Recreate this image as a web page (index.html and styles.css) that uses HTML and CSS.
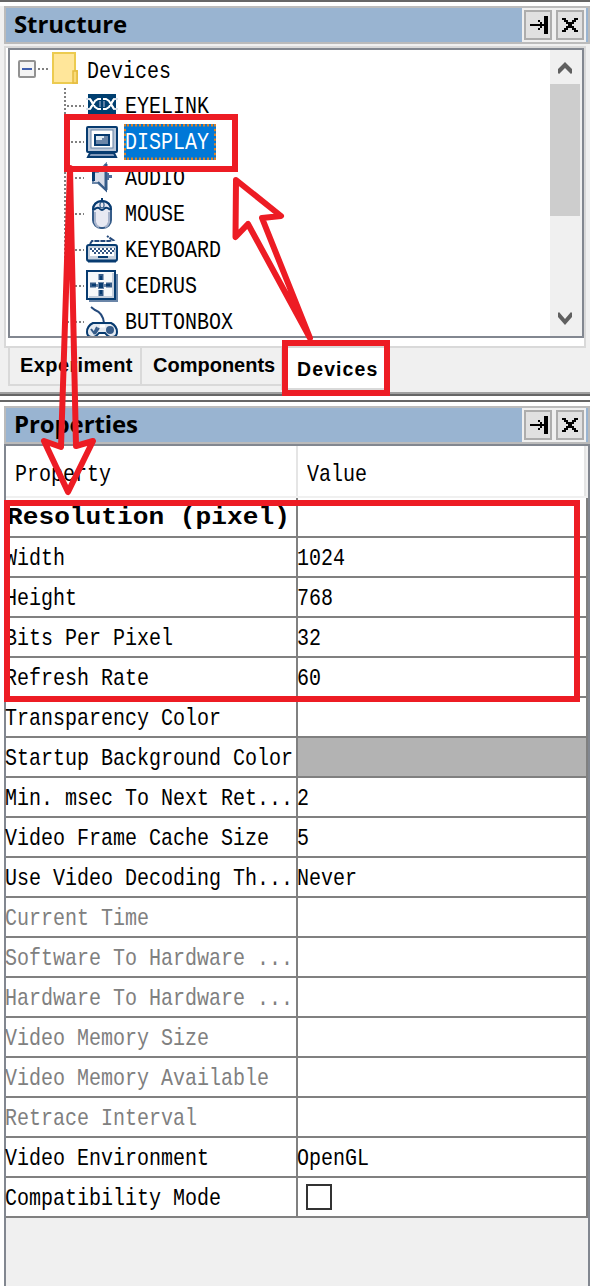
FILE: index.html
```html
<!DOCTYPE html>
<html lang="en">
<head>
<meta charset="utf-8">
<title>Structure and Properties</title>
<link rel="stylesheet" href="styles.css">
</head>
<body>
<div class="app">
  <section class="structure">
    <header class="titlebar"><h2>Structure</h2>
      <div class="buttons">
        <button><svg width="24" height="26" shape-rendering="crispEdges"><path d="M4 12h14v2H4zM18 4h4v18h-4zM14 10h2v6h-2zM12 8h2v2h-2zM12 16h2v2h-2z"/></svg></button>
        <button><svg width="24" height="26" shape-rendering="crispEdges"><path d="M4 6h4v2H4zM16 6h4v2h-4zM6 8h4v2H6zM14 8h4v2h-4zM8 10h8v2H8zM10 12h4v2h-4zM8 14h8v2H8zM6 16h4v2H6zM14 16h4v2h-4zM4 18h4v2H4zM16 18h4v2h-4z"/></svg></button>
      </div>
    </header>
    <div class="pane">
      <div class="tree">
        <div class="nodes">
          <div class="node root">
            <svg width="77" height="36"><rect x="9" y="9" width="16" height="16" rx="1" fill="#f4f4f4" stroke="#929292" stroke-width="2"/><path d="M12 17h10" stroke="#405fae" stroke-width="2"/><path d="M28 17h10" stroke="#808080" stroke-width="2" stroke-dasharray="2 2"/><path d="M43 1h22v18h2v12H43z" fill="#ffe69a" stroke="#eccb50" stroke-width="2"/><path d="M63 31V19h4v12z" fill="#fadb79" stroke="#e5bc40" stroke-width="1.5"/></svg><span class="mono">Devices</span>
          </div>
          <div class="node"><i class="branch"></i><svg class="ico" width="32" height="32"><path fill="#003f70" d="M2 4h28v20H2z"/><path d="M0 9l4 0 3 5-3 5H0M32 9l-4 0-3 5 3 5h4" fill="none" stroke="#d7e0ea" stroke-width="2"/><path d="M4 9l5 8 3 2h8l3-2 5-8M4 19l5-8 3-2h8l3 2 5 8" fill="none" stroke="#fff" stroke-width="2"/><path d="M13 11h6v6h-6z" fill="#5b7da3"/><path d="M15 8h2v12h-2z" fill="#003f70"/></svg><span class="mono">EYELINK</span></div>
          <div class="node"><i class="branch"></i><svg class="ico" width="32" height="32"><rect x="1" y="1" width="30" height="25" rx="1" fill="#b9c6d8" stroke="#073b70" stroke-width="2"/><rect x="5" y="4" width="22" height="18" fill="#fff" stroke="#6b86a8"/><rect x="9" y="9" width="14" height="10" fill="#6b86a8" stroke="#073b70" stroke-width="2"/><path d="M10 10h8v2h-2v2h-6z" fill="#dfeaf2"/><path d="M4 27h24l2 4H2z" fill="#8299ba" stroke="#073b70" stroke-width="2"/></svg><span class="mono selected">DISPLAY</span></div>
          <div class="node"><i class="branch"></i><svg class="ico" width="32" height="32"><path d="M7 10h5l8-8v26l-8-7H7z" fill="#d8dce8" stroke="#6b86a8" stroke-width="2"/><path d="M12 20l8 8v-9" fill="none" stroke="#365c89" stroke-width="2"/><path d="M6 9h3v10H6z" fill="#073b70"/><path d="M20 2v26" stroke="#365c89" stroke-width="3"/><path d="M21 11h2v2h3v3h-3v2h-2z" fill="#4d6c9a"/></svg><span class="mono">AUDIO</span></div>
          <div class="node"><i class="branch"></i><svg class="ico" width="32" height="32"><rect x="7" y="3" width="18" height="27" rx="8" fill="#e8e9f2" stroke="#365c89" stroke-width="2"/><path d="M7 12q0-8 9-9 9 1 9 9M8 12q2-3 5-2 3 4 6 0 3-1 5 2M16 0v4" fill="none" stroke="#073b70" stroke-width="2"/><rect x="14" y="4" width="4" height="6" rx="2" fill="#e8e9f2" stroke="#073b70"/><path d="M9 14v10q1 4 4 5M23 14v10q-1 4-4 5" stroke="#a8b4cc" stroke-width="2" fill="none"/></svg><span class="mono">MOUSE</span></div>
          <div class="node"><i class="branch"></i><svg class="ico" width="32" height="32"><path d="M4 10l2-3h17l4-1-6-4" fill="none" stroke="#24497b" stroke-width="2" stroke-dasharray="5 1"/><rect x="1" y="11" width="30" height="16" rx="2" fill="#c5cfdc" stroke="#073b70" stroke-width="2"/><path d="M4 14h24v8H4z" fill="#fff"/><path d="M4 15h25M6 17h22M8 19h18" stroke="#365783" stroke-width="2" stroke-dasharray="2 2"/><path d="M12 23h10" stroke="#073b70" stroke-width="2"/><path d="M2 27h28" stroke="#073b70" stroke-width="3"/></svg><span class="mono">KEYBOARD</span></div>
          <div class="node"><i class="branch"></i><svg class="ico" width="32" height="32"><path d="M3 4h29v28H3z" fill="#6b86a8"/><rect x="1" y="1" width="28" height="28" fill="#f6f8fa" stroke="#073b70" stroke-width="2"/><path d="M26 3h2v25H3v-2h23z" fill="#c5cfdc"/><path d="M15 4v6M15 20v6M4 15h6M20 15h6" stroke="#365c89" stroke-width="5"/><path d="M15 6v4M15 20v4M6 15h4M20 15h4" stroke="#073b70" stroke-width="2"/><path d="M12 14v-2h6v2h2v3h-2v2h-6v-2h-2v-3z" fill="#6b86a8"/><path d="M13 13h4v5h-4z" fill="#073b70"/></svg><span class="mono">CEDRUS</span></div>
          <div class="node"><i class="branch"></i><svg class="ico" width="32" height="32"><path d="M5 1l4 3q8 3 9 13" fill="none" stroke="#24497b" stroke-width="2"/><path d="M7 17h18q6 3 6 9 0 5-5 5-4 0-7-4h-6q-3 4-7 4-5 0-5-5 0-6 6-9z" fill="#e4eaf1" stroke="#073b70" stroke-width="2"/><path d="M5 23l3 4 3-6M9 28l4-6" fill="none" stroke="#365c89" stroke-width="2"/><circle cx="24" cy="24" r="4" fill="#365c89"/><path d="M14 20h5" stroke="#fff" stroke-width="3"/></svg><span class="mono">BUTTONBOX</span></div>
        </div>
        <div class="scrollbar"><svg width="30" height="34"><path d="M8 23v-4l7-7 7 7v4l-1 1-6-6-6 6z" fill="#606060"/></svg><div class="thumb"></div><svg class="down" width="30" height="34"><path d="M8 11v4l7 8 7-8v-4l-1-1-6 7-6-7z" fill="#606060"/></svg></div>
      </div>
    </div>
    <nav class="tabs"><span class="tab experiment">Experiment</span><span class="tab components">Components</span><span class="tab active">Devices</span></nav>
  </section>
  <div class="splitter"></div>
  <section class="properties">
    <header class="titlebar"><h2>Properties</h2>
      <div class="buttons">
        <button><svg width="24" height="26" shape-rendering="crispEdges"><path d="M4 12h14v2H4zM18 4h4v18h-4zM14 10h2v6h-2zM12 8h2v2h-2zM12 16h2v2h-2z"/></svg></button>
        <button><svg width="24" height="26" shape-rendering="crispEdges"><path d="M4 6h4v2H4zM16 6h4v2h-4zM6 8h4v2H6zM14 8h4v2h-4zM8 10h8v2H8zM10 12h4v2h-4zM8 14h8v2H8zM6 16h4v2H6zM14 16h4v2h-4zM4 18h4v2H4zM16 18h4v2h-4z"/></svg></button>
      </div>
    </header>
    <div class="sheet">
      <div class="columns"><div><span class="mono">Property</span></div><div><span class="mono">Value</span></div></div>
      <div class="row group"><div><span class="mono">Resolution (pixel)</span></div><div></div></div>
      <div class="row"><div><span class="mono">Width</span></div><div><span class="mono">1024</span></div></div>
      <div class="row"><div><span class="mono">Height</span></div><div><span class="mono">768</span></div></div>
      <div class="row"><div><span class="mono">Bits Per Pixel</span></div><div><span class="mono">32</span></div></div>
      <div class="row"><div><span class="mono">Refresh Rate</span></div><div><span class="mono">60</span></div></div>
      <div class="row"><div><span class="mono">Transparency Color</span></div><div></div></div>
      <div class="row"><div><span class="mono">Startup Background Color</span></div><div class="swatch"></div></div>
      <div class="row"><div><span class="mono">Min. msec To Next Ret...</span></div><div><span class="mono">2</span></div></div>
      <div class="row"><div><span class="mono">Video Frame Cache Size</span></div><div><span class="mono">5</span></div></div>
      <div class="row"><div><span class="mono">Use Video Decoding Th...</span></div><div><span class="mono">Never</span></div></div>
      <div class="row disabled"><div><span class="mono">Current Time</span></div><div></div></div>
      <div class="row disabled"><div><span class="mono">Software To Hardware ...</span></div><div></div></div>
      <div class="row disabled"><div><span class="mono">Hardware To Hardware ...</span></div><div></div></div>
      <div class="row disabled"><div><span class="mono">Video Memory Size</span></div><div></div></div>
      <div class="row disabled"><div><span class="mono">Video Memory Available</span></div><div></div></div>
      <div class="row disabled"><div><span class="mono">Retrace Interval</span></div><div></div></div>
      <div class="row"><div><span class="mono">Video Environment</span></div><div><span class="mono">OpenGL</span></div></div>
      <div class="row"><div><span class="mono">Compatibility Mode</span></div><div><span class="check"></span></div></div>
    </div>
  </section>
  <svg class="annotations" width="590" height="1286" fill="none" stroke="#ed1c24" stroke-width="6">
    <rect x="67" y="117" width="168" height="52"/>
    <rect x="285" y="343" width="102" height="50"/>
    <rect x="7" y="503" width="570" height="196"/>
    <path stroke-linejoin="round" d="M70 168L76 446 93 441 68 492 44 441 61 447z"/>
    <path stroke-linejoin="round" d="M236 180L281 216 262 218 310 338 248 224 235.500 237z"/>
  </svg>
</div>
</body>
</html>
```
FILE: styles.css
```css
* { box-sizing: border-box; }
body { margin: 0; background: #fff; color: #000; }
.app { position: relative; width: 590px; height: 1286px; overflow: hidden; border-top: 2px solid #666; display: flex; flex-direction: column; }
.annotations { position: absolute; left: 0; top: -2px; pointer-events: none; }
.mono { display: inline-block; font: 20px/24px "Liberation Mono", monospace; white-space: pre; transform: scaleY(1.2); transform-origin: left center; }
.structure { height: 390px; padding: 4px 0 0 4px; background: linear-gradient(#fff 4px, #f0f0f0 4px); }
.titlebar { height: 38px; border: 2px solid #bbb; background: #99b4d1; display: flex; align-items: center; justify-content: space-between; }
.titlebar h2 { margin: 0 0 0 8px; padding-bottom: 2px; font: bold 24px/32px "Open Sans", sans-serif; letter-spacing: -.1px; }
.buttons { display: flex; gap: 4px; width: 64px; height: 34px; padding: 2px; margin-right: 2px; background: #f0f0f0; }
.buttons button { width: 28px; height: 30px; padding: 0; border: 2px solid #adadad; background: #e1e1e1; }
.buttons svg { display: block; }
.pane { width: 582px; height: 302px; margin-top: 2px; border: 2px solid #d9d9d9; background: #fff; padding: 0 0 8px 2px; }
.tree { width: 576px; height: 290px; border: 2px solid #828790; display: flex; overflow: hidden; }
.nodes { flex: 1; padding-top: 2px; background: linear-gradient(#808080 50%, transparent 50%) 54px 34px / 2px 4px repeat-y; }
.node { height: 36px; display: flex; align-items: center; padding-left: 57px; }
.node.root { padding-left: 0; background: #fff; }
.branch { width: 17px; height: 2px; margin-right: 2px; background: linear-gradient(90deg, #808080 50%, transparent 50%) 0 0 / 4px 2px; }
.ico { margin-right: 6px; flex: none; }
.node > .mono { padding: 2px 2px 0 1px; }
.node.root > .mono { padding: 3px 0 0; }
.node > .mono.selected { height: 30px; line-height: 30px; width: 92px; padding: 1px 0 0 1px; background: #0078d7; color: #fff; outline: 2px dotted #d8832e; outline-offset: -2px; }
.scrollbar { width: 32px; display: flex; flex-direction: column; background: #f0f0f0; }
.scrollbar svg { flex: none; }
.thumb { width: 30px; height: 132px; background: #cdcdcd; }
.down { margin-top: auto; }
.tabs { height: 44px; display: flex; padding-left: 4px; }
.tab { height: 38px; border: solid #d9d9d9; border-width: 0 0 2px 2px; font: bold 20px/35px "Liberation Sans", Arial, sans-serif; }
.experiment { width: 132px; padding-left: 10px; letter-spacing: .4px; }
.components { width: 141px; padding-left: 11px; }
.active { width: 108px; height: 42px; line-height: 43px; padding-left: 14px; background: #fff; font-size: 19.5px; letter-spacing: 1.1px; }
.splitter { height: 12px; background: linear-gradient(#a0a0a0 2px, #666 2px 4px, #fff 4px 8px, #666 8px 10px, #fff 10px); }
.properties { height: 882px; padding: 2px 0 0 4px; }
.sheet { height: 842px; border: 2px solid #828790; border-bottom: 0; background: #f0f0f0; }
.columns, .row { display: grid; background: #fff; }
.columns { height: 52px; width: 580px; grid-template-columns: 292px 288px; border-bottom: 2px solid #f0f0f0; }
.columns > div { padding: 17px 0 0 9px; border-right: 2px solid #e5e5e5; }
.columns > div + div { padding-left: 9px; }
.row { height: 40px; grid-template-columns: 292px 290px; width: 582px; border-bottom: 2px solid #808080; }
.row > div { display: flex; align-items: center; border-right: 2px solid #808080; }
.row .mono { margin: 3px 0 0 -1px; }
.row.group .mono { margin: 2px 0 0 1px; font-size: 26.2px; font-weight: bold; transform: scaleY(.92); }
.disabled { color: #808080; }
.swatch { background: #b3b3b3; }
.check { width: 26px; height: 26px; margin-left: 8px; border: 2px solid #333; background: #fff; }
```
